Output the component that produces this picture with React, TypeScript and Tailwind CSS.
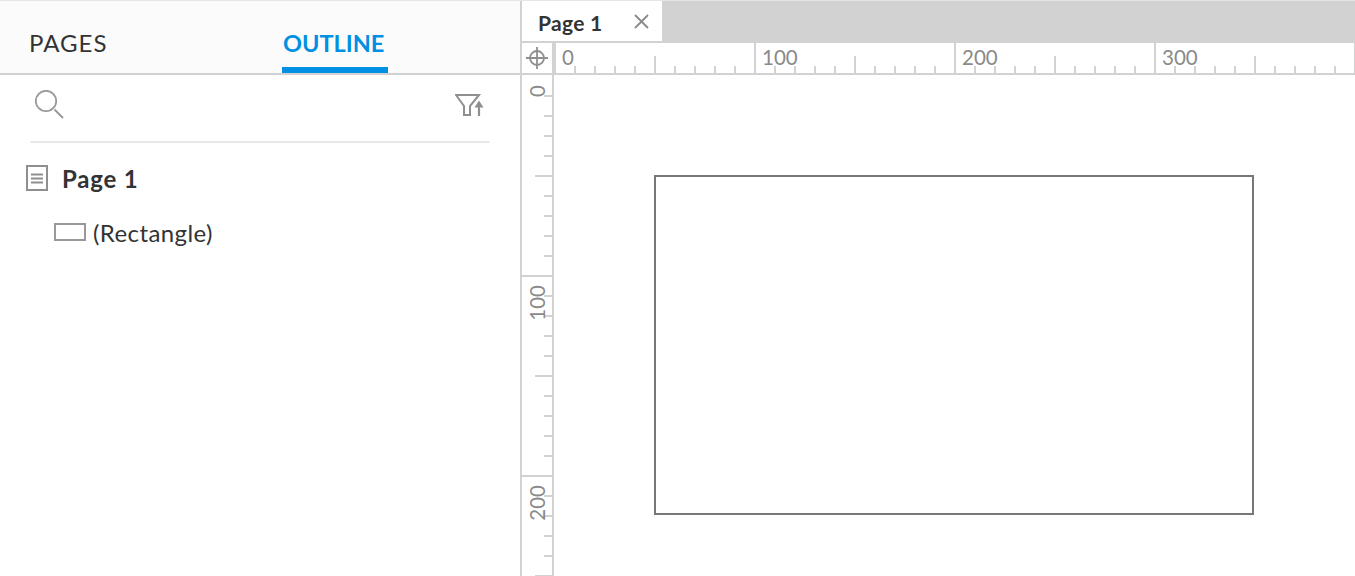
import React from 'react';

const font = { fontFamily: 'Lato, "Noto Sans", sans-serif' };
const cells = [1, 2, 3, 4, 5, 6, 7, 8, 9, 10];

const SearchIcon = () => (
  <svg width="30" height="30" viewBox="0 0 30 30" fill="none" stroke="#999999" strokeWidth="1.8">
    <circle cx="11" cy="11" r="10.2" />
    <path d="M19.500 19.500l8.500 8.500" strokeWidth="2" />
  </svg>
);

const FilterIcon = () => (
  <svg width="30" height="24" viewBox="0 0 30 24" fill="none" stroke="#8f8f8f" strokeWidth="2">
    <path d="M1 2h23l-9 11v9H9v-9z" />
    <path d="M24 23V10" strokeWidth="2.200" />
    <path d="M19.500 14.500l4.500-7 4.500 7z" fill="#8f8f8f" stroke="none" />
  </svg>
);

const PageIcon = () => (
  <svg width="22" height="26" viewBox="0 0 22 26" fill="none" stroke="#8f8f8f">
    <rect x="1" y="1" width="20" height="24" strokeWidth="2" />
    <path d="M5 9.500h12M5 13.500h12M5 17.500h12" strokeWidth="1.800" />
  </svg>
);

const CrossHair = () => (
  <svg width="24" height="24" viewBox="0 0 24 24" fill="none" stroke="#8f8f8f" strokeWidth="1.800">
    <circle cx="12" cy="12" r="7" />
    <path d="M12 1v22M1 12h22" />
  </svg>
);

const CloseIcon = () => (
  <svg width="15" height="15" viewBox="0 0 15 15" fill="none" stroke="#8a8a8a" strokeWidth="1.800">
    <path d="M1 1l13 13M14 1L1 14" />
  </svg>
);

const HorizontalSegment = ({ label }: { label: string }) => (
  <div className="relative flex h-[30px] shrink-0 items-end">
    <span className="absolute left-[6px] top-[2px] text-[20.5px] leading-[24px] text-[#8a8a8a]">{label}</span>
    {cells.map((i) => (
      <div key={i} className="flex h-full w-[20px] items-end justify-end">
        <div className={`w-[2px] bg-[#d2d2d2] ${i === 10 ? 'h-[30px]' : i === 5 ? 'h-[17px]' : 'h-[7px]'}`} />
      </div>
    ))}
  </div>
);

const VerticalSegment = ({ label }: { label: string }) => (
  <div className="relative flex w-[30px] shrink-0 flex-col items-end">
    <span className="absolute left-[3px] top-[8px] rotate-180 text-[20.5px] leading-[24px] text-[#8a8a8a] [writing-mode:vertical-rl]">
      {label}
    </span>
    {cells.map((i) => (
      <div key={i} className="flex h-[20px] w-full shrink-0 items-end justify-end">
        <div className={`h-[2px] bg-[#d2d2d2] ${i === 10 ? 'w-[30px]' : i === 5 ? 'w-[17px]' : 'w-[8px]'}`} />
      </div>
    ))}
  </div>
);

export default function App() {
  return (
    <div className="flex h-[576px] w-[1355px] overflow-hidden border-t border-[#e5e5e5] bg-white" style={font}>
      {/* left panel */}
      <aside className="flex w-[522px] shrink-0 flex-col border-r-2 border-[#d2d2d2]">
        <div className="flex h-[74px] shrink-0 border-b-2 border-[#d2d2d2] bg-[#fbfbfb]">
          <div className="ml-[29px] w-[253px] pt-[27px] text-[24px] leading-[30px] tracking-[1px] text-[#333333]">PAGES</div>
          <div className="h-[72px] w-[106px] border-b-[6px] border-[#0090e3] pl-[1px] pt-[27px] text-[23.5px] font-bold leading-[30px] text-[#0090e3]">
            OUTLINE
          </div>
        </div>
        <div className="mx-[30px] flex h-[68px] shrink-0 items-center justify-between border-b-2 border-[#e8e8e8] pb-[6px] pl-[5px] pr-[5px]">
          <SearchIcon />
          <FilterIcon />
        </div>
        <div className="ml-[26px] mt-[22px] flex h-[26px] items-center gap-[14px]">
          <PageIcon />
          <span className="mt-[1px] text-[24px] font-bold leading-[26px] tracking-[0.8px] text-[#333333]">Page 1</span>
        </div>
        <div className="ml-[54px] mt-[28px] flex h-[26px] items-center gap-[7px]">
          <div className="h-[18px] w-[32px] border-2 border-[#999999]" />
          <span className="mt-[1px] text-[24px] leading-[26px] tracking-[0.4px] text-[#333333]">(Rectangle)</span>
        </div>
      </aside>

      {/* right side */}
      <main className="flex min-w-0 flex-1 flex-col">
        <div className="flex h-[42px] shrink-0 bg-[#d2d2d2]">
          <div className="flex h-[40px] w-[140px] items-center justify-between bg-white pl-[16px] pr-[13px]">
            <span className="mt-[3px] text-[21px] font-bold leading-[24px] tracking-[0.3px] text-[#333333]">Page 1</span>
            <CloseIcon />
          </div>
        </div>
        <div className="flex h-[32px] shrink-0 overflow-hidden border-b-2 border-[#d2d2d2]">
          <div className="flex w-[30px] shrink-0 items-center justify-center pr-[1px]">
            <CrossHair />
          </div>
          <div className="w-[4px] shrink-0 bg-[#d2d2d2]" />
          {['0', '100', '200', '300'].map((label) => (
            <HorizontalSegment key={label} label={label} />
          ))}
        </div>
        <div className="flex min-h-0 flex-1">
          <div className="h-full w-[32px] shrink-0 overflow-hidden border-r-2 border-[#d2d2d2] pt-[2px]">
            {['0', '100', '200'].map((label) => (
              <VerticalSegment key={label} label={label} />
            ))}
          </div>
          <div className="pl-[100px] pt-[100px]">
            <div className="h-[340px] w-[600px] border-2 border-[#777777]" />
          </div>
        </div>
      </main>
    </div>
  );
}
